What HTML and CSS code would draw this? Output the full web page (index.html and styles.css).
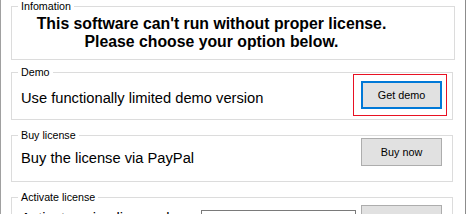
FILE: index.html
```html
<!DOCTYPE html>
<html lang="en">
<head>
    <meta charset="UTF-8">
    <meta name="viewport" content="width=device-width, initial-scale=1.0">
    <title>License</title>
    <link rel="stylesheet" href="styles.css">
</head>
<body>
    <div class="window">
        <fieldset class="group group-info">
            <legend>Infomation</legend>
            <p class="notice">This software can't run without proper license.<br>Please choose your option below.</p>
        </fieldset>

        <fieldset class="group group-demo">
            <legend>Demo</legend>
            <div class="row">
                <span class="caption">Use functionally limited demo version</span>
                <span class="highlight">
                    <button class="btn btn-focus">Get demo</button>
                </span>
            </div>
        </fieldset>

        <fieldset class="group group-buy">
            <legend>Buy license</legend>
            <div class="row">
                <span class="caption">Buy the license via PayPal</span>
                <button class="btn">Buy now</button>
            </div>
        </fieldset>

        <fieldset class="group group-activate">
            <legend>Activate license</legend>
            <div class="row">
                <span class="caption">Activate using license key</span>
                <input type="text" class="key-input">
                <button class="btn btn-low">Activate</button>
            </div>
        </fieldset>
    </div>
</body>
</html>
```

FILE: styles.css
```css
body {
    margin: 0;
    padding: 0;
    background-color: #ffffff;
    font-family: "Liberation Sans", Arial, sans-serif;
    color: #000000;
}

.window {
    box-sizing: border-box;
    width: 466px;
    height: 214px;
    overflow: hidden;
    padding: 0 0 0 10px;
    border-left: 1px solid #a0a0a0;
    border-right: 1px solid #8c8c8c;
    background-color: #ffffff;
}

.group {
    box-sizing: border-box;
    width: 442px;
    margin: 0;
    padding: 0 10px 0 9px;
    border: 1px solid #dcdcdc;
}

.group legend {
    padding: 1px 3px 0;
    margin-left: -3px;
    font-size: 10.7px;
    line-height: 11px;
}

.group-info {
    width: 444px;
    padding-top: 3px;
    padding-bottom: 8px;
}

.notice {
    margin: 0 42px 0 0;
    font-size: 15.8px;
    font-weight: bold;
    line-height: 18px;
    text-align: center;
}

.group-demo {
    margin-top: 6px;
    height: 54px;
}

.group-buy {
    margin-top: 9px;
    height: 53px;
}

.group-activate {
    margin-top: 9px;
    height: 60px;
}

.row {
    display: flex;
    align-items: flex-start;
}

.caption {
    flex: 1;
    font-size: 14.7px;
    line-height: 17px;
}

.group-demo .row {
    margin-top: 3px;
}

.group-demo .caption {
    margin-top: 9px;
}

.group-buy .row {
    margin-top: -3px;
}

.group-buy .caption {
    margin-top: 12px;
}

.group-activate .row {
    margin-top: 2px;
}

.group-activate .caption {
    margin-top: 5px;
}

.btn {
    box-sizing: border-box;
    width: 81px;
    height: 28px;
    margin: 0;
    padding: 0;
    border: 1px solid #adadad;
    background-color: #e1e1e1;
    font-family: "Liberation Sans", Arial, sans-serif;
    font-size: 10.8px;
    color: #000000;
}

.btn-focus {
    display: block;
    border: 2px solid #0078d7;
}

.btn-low {
    padding-top: 4px;
}

.highlight {
    position: relative;
    display: block;
}

.highlight::after {
    content: "";
    position: absolute;
    top: -7px;
    right: -5px;
    bottom: -7px;
    left: -8px;
    border: 1px solid #e81123;
    pointer-events: none;
}

.key-input {
    box-sizing: border-box;
    width: 155px;
    height: 23px;
    margin: 5px 5px 0 0;
    border: 1px solid #7a7a7a;
    background-color: #ffffff;
}
```
